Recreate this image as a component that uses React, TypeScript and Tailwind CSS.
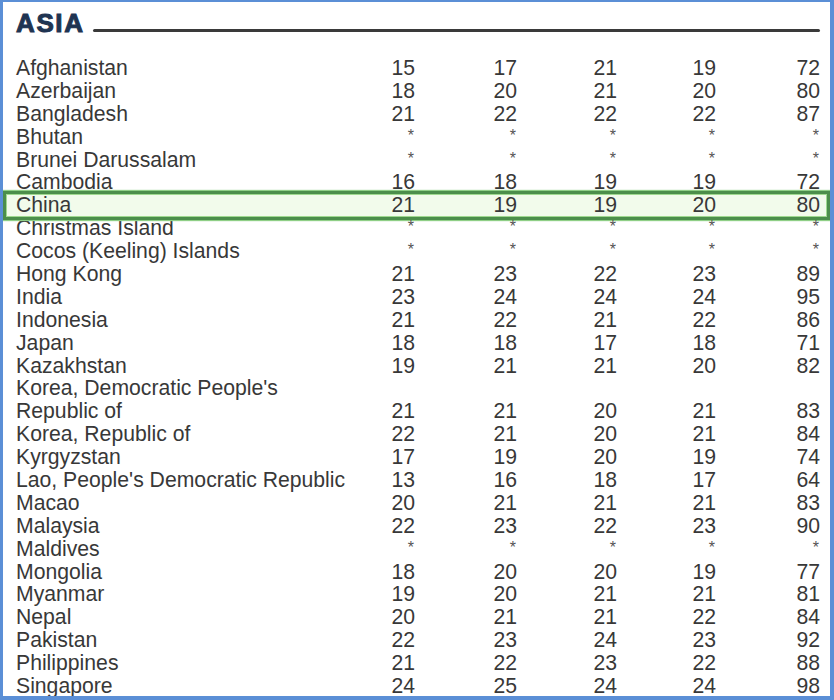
import React from "react";

type Row = { name: string; v?: (string)[] };

const S = ["*", "*", "*", "*", "*"];

const rows: Row[] = [
  { name: "Afghanistan", v: ["15", "17", "21", "19", "72"] },
  { name: "Azerbaijan", v: ["18", "20", "21", "20", "80"] },
  { name: "Bangladesh", v: ["21", "22", "22", "22", "87"] },
  { name: "Bhutan", v: S },
  { name: "Brunei Darussalam", v: S },
  { name: "Cambodia", v: ["16", "18", "19", "19", "72"] },
  { name: "China", v: ["21", "19", "19", "20", "80"] },
  { name: "Christmas Island", v: S },
  { name: "Cocos (Keeling) Islands", v: S },
  { name: "Hong Kong", v: ["21", "23", "22", "23", "89"] },
  { name: "India", v: ["23", "24", "24", "24", "95"] },
  { name: "Indonesia", v: ["21", "22", "21", "22", "86"] },
  { name: "Japan", v: ["18", "18", "17", "18", "71"] },
  { name: "Kazakhstan", v: ["19", "21", "21", "20", "82"] },
  { name: "Korea, Democratic People's" },
  { name: "Republic of", v: ["21", "21", "20", "21", "83"] },
  { name: "Korea, Republic of", v: ["22", "21", "20", "21", "84"] },
  { name: "Kyrgyzstan", v: ["17", "19", "20", "19", "74"] },
  { name: "Lao, People's Democratic Republic", v: ["13", "16", "18", "17", "64"] },
  { name: "Macao", v: ["20", "21", "21", "21", "83"] },
  { name: "Malaysia", v: ["22", "23", "22", "23", "90"] },
  { name: "Maldives", v: S },
  { name: "Mongolia", v: ["18", "20", "20", "19", "77"] },
  { name: "Myanmar", v: ["19", "20", "21", "21", "81"] },
  { name: "Nepal", v: ["20", "21", "21", "22", "84"] },
  { name: "Pakistan", v: ["22", "23", "24", "23", "92"] },
  { name: "Philippines", v: ["21", "22", "23", "22", "88"] },
  { name: "Singapore", v: ["24", "25", "24", "24", "98"] },
];

function Cell({ t }: { t: string }) {
  if (t === "*") {
    return (
      <div className="text-right text-[16px] text-[#555] leading-[22.9px] -translate-y-[1px] pr-[1px]">
        *
      </div>
    );
  }
  return <div className="text-right">{t}</div>;
}

export default function App() {
  return (
    <div
      className="w-[834px] h-[700px] overflow-hidden bg-white border-[#5b8fd6] border-t-[2px] border-l-[3px] border-r-[4px] border-b-[4px]"
      style={{ fontFamily: '"Liberation Sans", Arial, sans-serif' }}
    >
      <div className="pl-[13px] pr-[10px]">
        <div className="flex items-end h-[34px] pt-[6px]">
          <div className="text-[26px] leading-[26px] font-black text-[#1f3452] tracking-[1.6px] [-webkit-text-stroke:1px_#1f3452]">
            ASIA
          </div>
          <div className="flex-1 ml-[8px] mb-[4px] h-[3px] bg-[#3a3a3a] rounded-full" />
        </div>
        <div className="mt-[21px] text-[21.2px] leading-[22.9px] text-[#383838]">
          {rows.map((r, i) => {
            const isChina = r.name === "China";
            return (
              <div
                key={i}
                className={
                  "grid grid-cols-[1fr_60px_102px_100px_99px_104px] h-[22.9px]" +
                  (isChina ? " relative" : "")
                }
              >
                {isChina && (
                  <div className="absolute left-[-13px] right-[-10px] top-[-3px] bottom-[-3px] border-[3px] border-[#4c8e4b] bg-[#f2fbeb] shadow-[inset_0_0_0_1px_#9fd98f,0_0_1px_1px_#8fcf86]" />
                )}
                <div className={"whitespace-nowrap" + (isChina ? " relative z-10" : "")}>{r.name}</div>
                {(r.v || ["", "", "", "", ""]).map((t, j) => (
                  <div key={j} className={isChina ? "relative z-10" : ""}>
                    <Cell t={t} />
                  </div>
                ))}
              </div>
            );
          })}
        </div>
      </div>
    </div>
  );
}
